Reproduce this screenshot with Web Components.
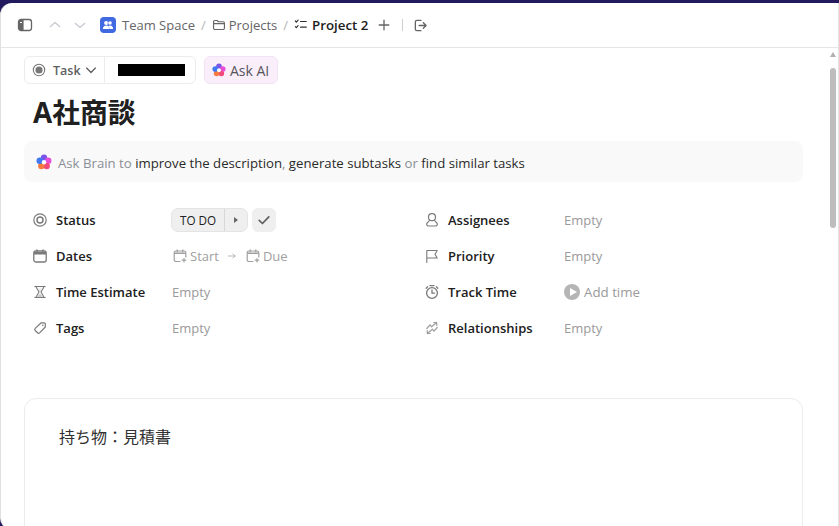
<!DOCTYPE html>
<html lang="ja"><head><meta charset="utf-8"><title>A社商談</title>
<style>
html,body{margin:0;height:100%;overflow:hidden;background:#221a5c}
body{font-family:"Open Sans","Noto Sans CJK JP",sans-serif;font-size:14px;color:#202020}
</style></head><body>
<task-window>
  <top-bar slot="top"></top-bar>
  <task-actions></task-actions>
  <task-title>A社商談</task-title>
  <ask-brain></ask-brain>
  <prop-grid></prop-grid>
  <desc-card>持ち物：見積書</desc-card>
</task-window>
<script>
const I={
 side:'<rect x="1.500" y="2.500" width="13" height="11" rx="2.500" fill="none" stroke="currentColor" stroke-width="1.300"/><path d="M3 3h3.600v10H3a1.400 1.400 0 0 1-1-1V4a1.400 1.400 0 0 1 1-1z" fill="currentColor"/><path d="M3 5.500h2" stroke="#fff" stroke-width="1"/>',
 up:'<path d="M2.500 10 8 5.200 13.500 10" fill="none" stroke="currentColor" stroke-width="1.300" stroke-linecap="round" stroke-linejoin="round"/>',
 down:'<path d="M2.500 6 8 10.800 13.500 6" fill="none" stroke="currentColor" stroke-width="1.300" stroke-linecap="round" stroke-linejoin="round"/>',
 folder:'<path d="M1.800 4.200c0-.8.6-1.400 1.400-1.400h2.600l1.400 1.500h5.600c.8 0 1.400.6 1.400 1.400v6c0 .8-.6 1.400-1.400 1.400H3.200c-.8 0-1.400-.6-1.400-1.400z" fill="none" stroke="currentColor" stroke-width="1.300" stroke-linejoin="round"/><path d="M2 6.500h12" stroke="currentColor" stroke-width="1.300"/>',
 list:'<path d="m1.500 3.400 1.200 1.200 2-2.300M1.500 9.800 2.700 11l2-2.300" fill="none" stroke="currentColor" stroke-width="1.300" stroke-linecap="round" stroke-linejoin="round"/><path d="M7.500 4h6.500M7.500 10.500H14" stroke="currentColor" stroke-width="1.400" stroke-linecap="round"/>',
 plus:'<path d="M8 2.500v11M2.500 8h11" stroke="currentColor" stroke-width="1.500" stroke-linecap="round"/>',
 exit:'<path d="M8.500 2.500H4.200A1.700 1.700 0 0 0 2.500 4.200v7.600c0 .9.8 1.700 1.700 1.700h4.300" fill="none" stroke="currentColor" stroke-width="1.400" stroke-linecap="round"/><path d="M6.500 8h7.500M11 5l3 3-3 3" fill="none" stroke="currentColor" stroke-width="1.400" stroke-linecap="round" stroke-linejoin="round"/>',
 status:'<circle cx="8" cy="8" r="6.200" fill="none" stroke="currentColor" stroke-width="1.200"/><circle cx="8" cy="8" r="3" fill="none" stroke="currentColor" stroke-width="1.500"/>',
 cal:'<rect x="1.800" y="3" width="12.400" height="11" rx="2" fill="none" stroke="currentColor" stroke-width="1.300"/><path d="M2 5.300h12" stroke="currentColor" stroke-width="2.400"/><path d="M5 1.800V4M11 1.800V4" stroke="currentColor" stroke-width="1.300" stroke-linecap="round"/>',
 calp:'<path d="M8 13.500H4A1.800 1.800 0 0 1 2.200 11.700V4.800C2.200 3.800 3 3 4 3h8c1 0 1.800.8 1.800 1.800V9M5.200 1.800V4M10.800 1.800V4M12 10.500v3.500M10.200 12.200h3.600" fill="none" stroke="currentColor" stroke-width="1.200" stroke-linecap="round"/><path d="M2.500 5.300h11" stroke="currentColor" stroke-width="1.600"/>',
 hour:'<path d="M2.800 2.500h10.400M2.800 13.500h10.400M3.800 2.500 7 8l-3.200 5.500M12.200 2.500 9 8l3.200 5.500" fill="none" stroke="currentColor" stroke-width="1.100" stroke-linecap="round"/><path d="M8 9.500 11 13H5z" fill="currentColor" opacity=".4"/><path d="M6 4.500h4L8 7.500z" fill="currentColor" opacity=".2"/>',
 tag:'<path d="M9.200 2.800h2.800c.8 0 1.300.5 1.300 1.300V7L7.600 12.800a1.500 1.500 0 0 1-2.100 0L3.200 10.500a1.500 1.500 0 0 1 0-2.100z" fill="none" stroke="currentColor" stroke-width="1.200" stroke-linejoin="round"/><circle cx="10.800" cy="5.300" r=".8" fill="currentColor"/>',
 user:'<circle cx="8" cy="5.200" r="3.500" fill="none" stroke="currentColor" stroke-width="1.200"/><path d="M5.800 8.200 3.200 10.800c-1 1.200-.5 3.200 1.200 3.200h7.200c1.700 0 2.200-2 1.200-3.200l-2.600-2.600" fill="none" stroke="currentColor" stroke-width="1.200" stroke-linejoin="round"/>',
 flag:'<path d="M2.800 14.500V2.500h10.400l-2.200 3.700 2.200 3.800H2.800" fill="none" stroke="currentColor" stroke-width="1.100" stroke-linejoin="round" stroke-linecap="round"/>',
 clock:'<circle cx="8" cy="9" r="5.400" fill="none" stroke="currentColor" stroke-width="1.300"/><path d="M8 6v3.200h2.400M6 1.700h4M2.200 4.200l1.400-1.400M13.800 4.200l-1.400-1.400" fill="none" stroke="currentColor" stroke-width="1.300" stroke-linecap="round"/>',
 rel:'<g opacity=".72"><path d="M2.800 8.500 6 4.800 7.600 6.800 12.500 2.500M9.800 2.500h2.900v2.900" fill="none" stroke="currentColor" stroke-width="1.200" stroke-linecap="round" stroke-linejoin="round"/><path d="M13.200 7.500 10 11.200 8.400 9.200 3.500 13.500M6.200 13.500H3.300v-2.900" fill="none" stroke="currentColor" stroke-width="1.200" stroke-linecap="round" stroke-linejoin="round"/></g>',
 chev:'<path d="M3 5.800 8 10.800 13 5.800" fill="none" stroke="currentColor" stroke-width="1.500" stroke-linecap="round" stroke-linejoin="round"/>',
 check:'<path d="M2.500 8.500 6.200 12 13.500 4.500" fill="none" stroke="currentColor" stroke-width="1.900" stroke-linecap="round" stroke-linejoin="round"/>',
 arrow:'<path d="M2 8h11M9.500 4.800 13 8l-3.500 3.200" fill="none" stroke="currentColor" stroke-width="1.400" stroke-linecap="round" stroke-linejoin="round"/>'
};
const svg=(n,s=16,c='')=>`<svg width="${s}" height="${s}" viewBox="0 0 16 16" style="display:block;flex:none;${c}">${I[n]}</svg>`;
const spark=(s=14)=>`<svg width="${s}" height="${s}" viewBox="0 0 16 16" style="display:block;flex:none"><circle cx="8" cy="3.800" r="3.200" fill="#7a55e8"/><circle cx="12.300" cy="6.800" r="3.200" fill="#e650d8"/><circle cx="10.700" cy="12" r="3.200" fill="#f2487a"/><circle cx="5.300" cy="12" r="3.200" fill="#f87a3e"/><circle cx="3.700" cy="6.800" r="3.200" fill="#3f78f2"/><circle cx="8" cy="8.300" r="2.200" fill="#fff"/></svg>`;
function def(name,html){customElements.define(name,class extends HTMLElement{constructor(){super();this.attachShadow({mode:'open'}).innerHTML=html;}});}

def('task-window',`<style>
:host{display:flex;flex-direction:column;height:526px;background:#221a5c;box-sizing:border-box;padding-top:3px;overflow:hidden}
.win{flex:1;min-height:0;margin-bottom:-4px;background:#fff;border-radius:12px 0 0 12px;border-left:1px solid #e0e0e0;border-right:1px solid #e4e4e4;display:flex;flex-direction:column;overflow:hidden}
.body{flex:1;min-height:0;display:flex}
.main{flex:1;min-width:0;padding:8px 24px 0 23px;overflow:hidden;display:flex;flex-direction:column}
.bar{width:11px;flex:none;display:flex;flex-direction:column;align-items:center}
.arrow{width:0;height:0;border:3px solid transparent;border-bottom:5px solid #b0b0b0;border-top:0;margin:4px 0 11px}
.thumb{width:6px;height:160px;border-radius:3px;background:#bdbdbd}
.hd{flex:none}
</style>
<div class="win"><div class="hd"><slot name="top"></slot></div>
<div class="body"><div class="main"><slot></slot></div><div class="bar"><div class="arrow"></div><div class="thumb"></div></div></div></div>`);

def('top-bar',`<style>
:host{display:flex;align-items:center;height:44px;border-bottom:1px solid #e6e6e6;padding-left:16px;color:#656565;font-size:13px}
.nav{display:flex;gap:11px;margin-left:15px;color:#c4c8ce}
.crumb{display:flex;align-items:center;gap:3px;color:#656565;white-space:nowrap}
.sep{color:#b5b5b5;margin:0 6px}
.logo{width:16px;height:16px;border-radius:4px;background:#4169e1;display:flex;align-items:center;justify-content:center;margin-left:13px}
b{font-weight:600;color:#202020;font-size:13.3px;margin-left:1px}
.div{width:1px;height:12px;background:#cfcfcf;margin:0 10px 0 11px}
.plus{margin-left:9px}
</style>
${svg('side',16)}
<div class="nav">${svg('up',14)}${svg('down',14)}</div>
<span class="logo"><svg width="12" height="12" viewBox="0 0 12 12"><circle cx="4.200" cy="4" r="2.100" fill="#fff"/><circle cx="8" cy="4" r="2.100" fill="#fff" stroke="#4169e1" stroke-width=".6"/><path d="M.9 10c0-2.300 1.400-3.500 3.300-3.500S7.500 7.700 7.500 10zM5.200 10h5.900c0-2.300-1.200-3.500-3.100-3.500-.8 0-1.500.2-2 .7.700.6 1.200 1.600 1.200 2.800z" fill="#fff"/></svg></span>
<span class="crumb" style="margin-left:6px">Team Space</span><span class="sep">/</span>
<span class="crumb">${svg('folder',14)}Projects</span><span class="sep">/</span>
<span class="crumb" style="color:#303030">${svg('list',14)}<b>Project 2</b></span>
<span class="plus">${svg('plus',14)}</span><span class="div"></span>${svg('exit',15)}`);

def('task-actions',`<style>
:host{display:flex;align-items:stretch;height:28px;font-size:12.5px;flex:none;gap:8px;color:#5f5f5f}
.grp{display:flex;border:1px solid #ececec;border-radius:6px}
.type{display:flex;align-items:center;width:80px;box-sizing:border-box;padding-left:7px;border-right:1px solid #ececec;font-weight:600}
.type .o{margin-right:7px}.type .c{margin-left:3px}
.id{width:90px;box-sizing:border-box;padding-left:13px;display:flex;align-items:center}
.id i{display:block;width:67px;height:12px;background:#000}
.ai{display:flex;align-items:center;gap:4px;padding:0 7.500px 0 7px;background:#faeefb;border:1px solid #f2e2f5;border-radius:6px;font-size:14px;font-weight:500;color:#55555c}
</style>
<div class="grp"><div class="type"><svg class="o" width="14" height="14" viewBox="0 0 14 14"><circle cx="7" cy="7" r="5.700" fill="none" stroke="#777" stroke-width="1.100"/><circle cx="7" cy="7" r="3.600" fill="#777"/></svg><span>Task</span><span class="c">${svg('chev',14)}</span></div><div class="id"><i></i></div></div>
<div class="ai">${spark(14)}<span>Ask AI</span></div>`);

def('task-title',`<style>:host{display:block;flex:none;font-size:27.8px;line-height:36px;font-weight:700;color:#202020;padding-left:9px;margin-top:10px}</style><slot></slot>`);

def('ask-brain',`<style>
:host{display:flex;align-items:center;flex:none;height:41px;margin-top:11px;background:#f9f9f9;border-radius:8px;padding-left:12px;font-size:13.2px;color:#2a2a2a;white-space:pre}
.g{color:#8a8f97}.sp{margin-right:6px}.t{padding-top:2px}
</style><span class="sp">${spark(16)}</span><span class="t"><span class="g">Ask Brain to </span>improve the description<span class="g">, </span>generate subtasks<span class="g"> or </span>find similar tasks</span>`);

const row=(ic,l,v)=>`<div class="r"><span class="ic">${svg(ic,16)}</span><span class="l">${l}</span><span class="v">${v}</span></div>`;
def('prop-grid',`<style>
:host{display:grid;flex:none;grid-template-columns:392px 1fr;margin-top:20px;font-size:13px}
.r{display:flex;align-items:center;height:36px;padding-left:8px}
.ic{width:24px;color:#7a7a7a}
.l{width:116px;font-weight:600;color:#202020}
.v{color:#9a9a9a;display:flex;align-items:center}
.st{display:flex;height:24px;margin-left:-1px;background:#efefef;border:1px solid #e4e4e4;border-radius:7px;box-sizing:border-box;color:#202020;font-size:11.7px;align-items:center}
.st>span{padding:0 8px;line-height:22px}
.st>i{display:flex;align-items:center;justify-content:center;width:22px;height:22px;border-left:1px solid #d8d8d8}
.tri{width:0;height:0;border-left:4px solid #666;border-top:3px solid transparent;border-bottom:3px solid transparent}
.chk{width:24px;height:24px;background:#efefef;border-radius:6px;margin-left:4px;display:flex;align-items:center;justify-content:center;color:#5d5d5d}
.play{width:16px;height:16px;border-radius:50%;background:#b5b5b5;display:flex;align-items:center;justify-content:center;margin-right:4px}
.play i{width:0;height:0;border-left:7px solid #fff;border-top:4.500px solid transparent;border-bottom:4.500px solid transparent;margin-left:2px}
.d{display:flex;align-items:center;gap:2px;color:#a0a0a0}
.ar{margin:0 8px;color:#b0b0b0}
.at{font-size:13.3px}
</style>
${row('status','Status',`<span class="st"><span>TO DO</span><i><b class="tri"></b></i></span><span class="chk">${svg('check',14)}</span>`)}
${row('user','Assignees','Empty')}
${row('cal','Dates',`<span class="d">${svg('calp',16)}Start</span><span class="ar">${svg('arrow',10)}</span><span class="d">${svg('calp',16)}Due</span>`)}
${row('flag','Priority','Empty')}
${row('hour','Time Estimate','Empty')}
${row('clock','Track Time','<span class="play"><i></i></span><span class="at">Add time</span>')}
${row('tag','Tags','Empty')}
${row('rel','Relationships','Empty')}`);

def('desc-card',`<style>:host{display:block;flex:none;height:200px;margin-top:52px;border:1px solid #ececec;border-radius:12px;padding:26px 34px;font-size:16px;line-height:24px;color:#303030}</style><slot></slot>`);
</script>
</body></html>
